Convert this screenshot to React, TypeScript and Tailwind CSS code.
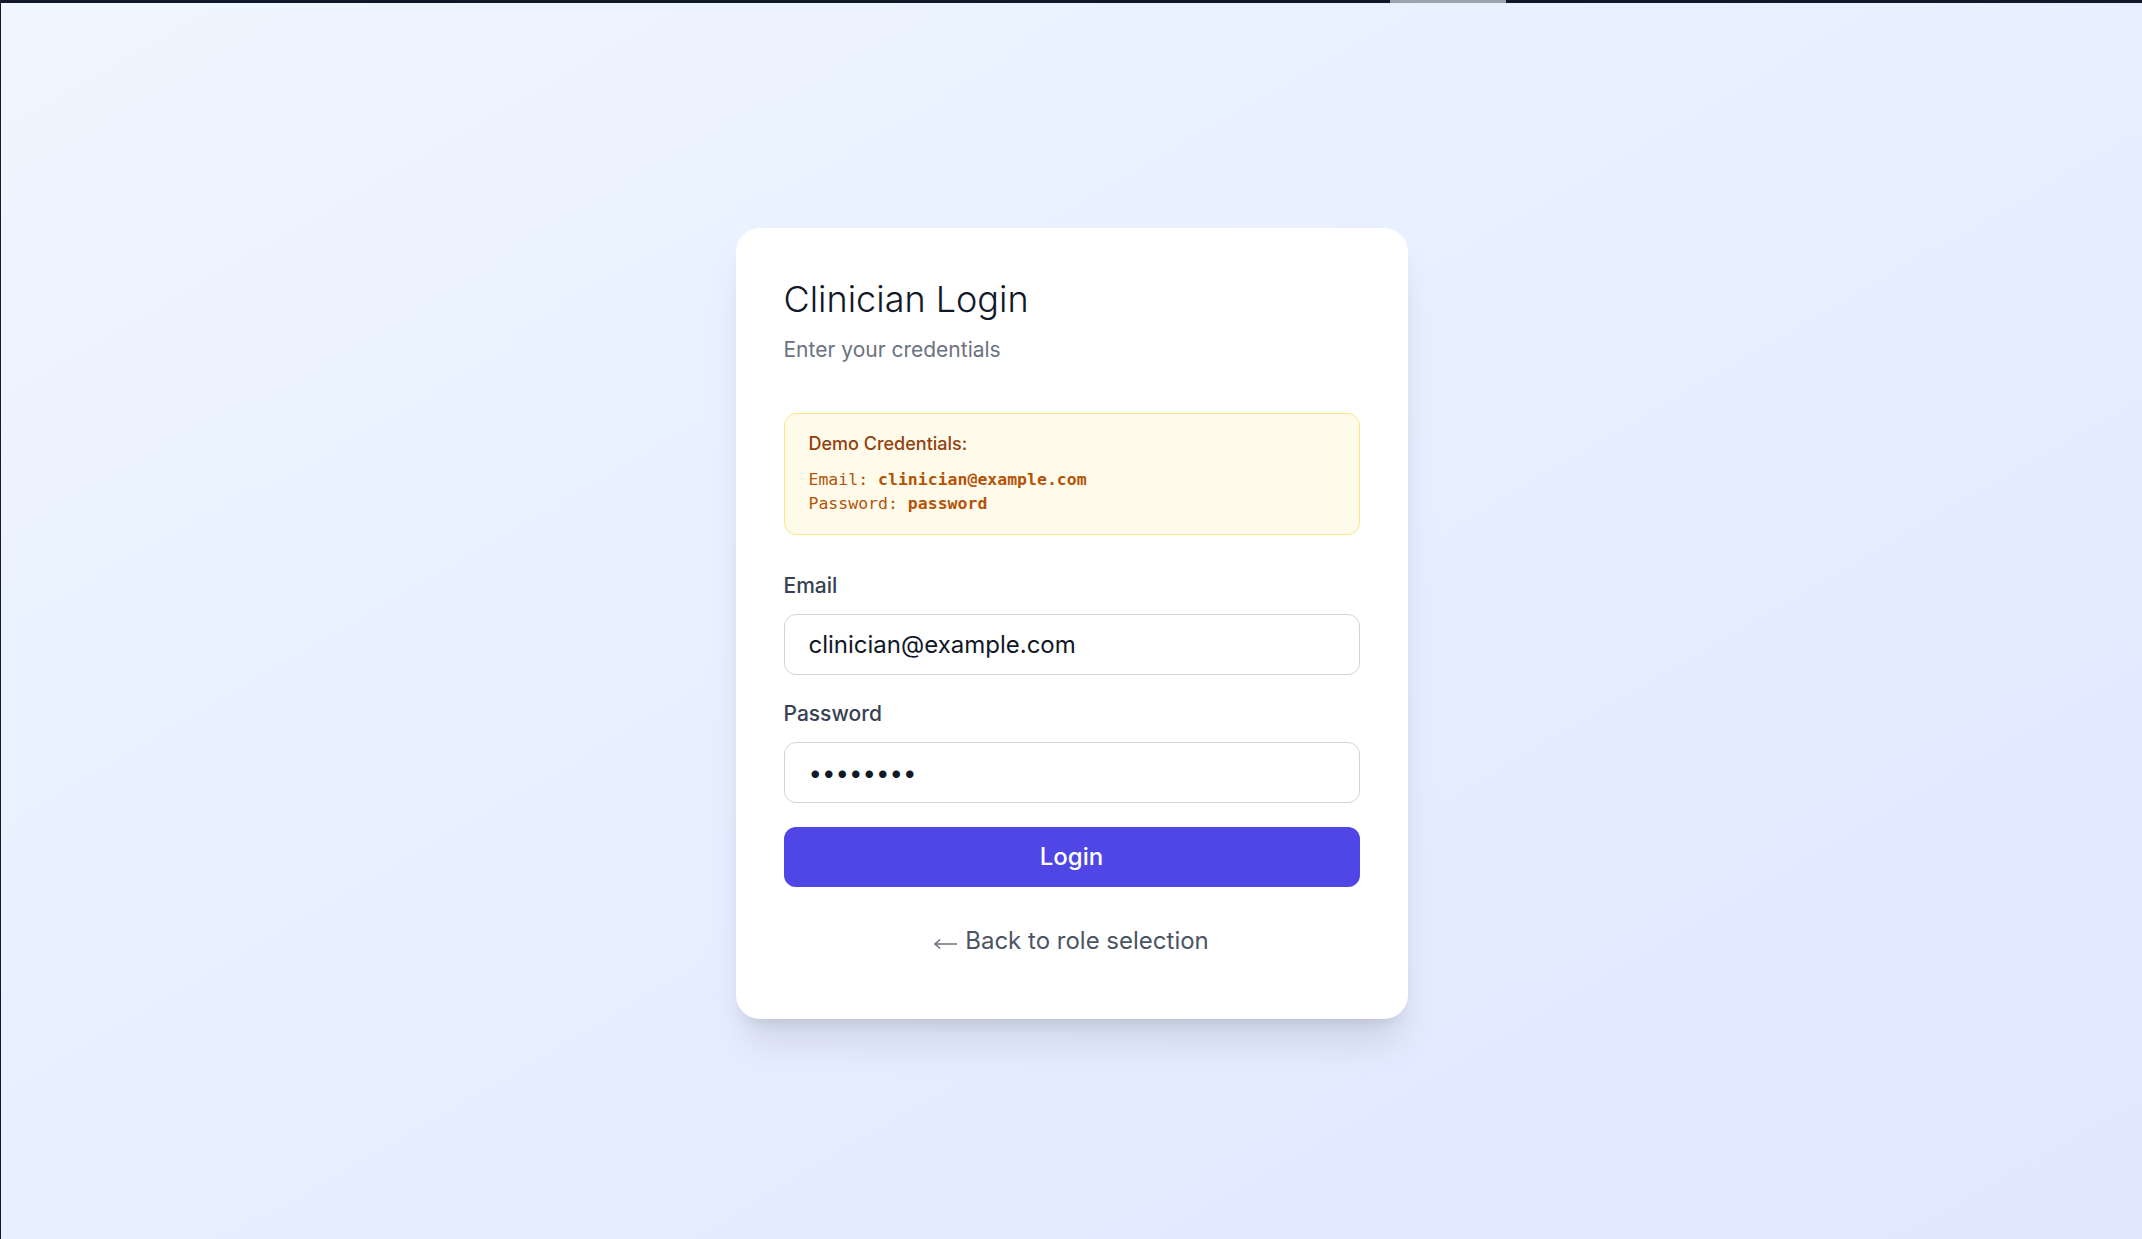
import { useState } from "react";

export default function App() {
  const [email, setEmail] = useState("clinician@example.com");
  const [password, setPassword] = useState("password");

  return (
    <div className="flex min-h-screen flex-col border-l border-[#1a1a24] bg-gradient-to-br from-[#eff6ff] to-[#e0e7ff] font-['Inter',sans-serif]">
      <div className="flex h-[3px] shrink-0">
        <div className="w-[1389px] bg-[#111827]" />
        <div className="w-[116px] bg-[#9ca3af]" />
        <div className="flex-1 bg-[#111827]" />
      </div>

      <main className="flex flex-1 items-center justify-center pt-[5px]">
        <div className="w-[672px] rounded-[24px] bg-white px-[48px] pb-[60px] pt-[47px] shadow-[0_30px_38px_-8px_rgba(0,0,0,0.1),0_12px_15px_-9px_rgba(0,0,0,0.1)]">
          <h1 className="text-[36px] leading-[48px] font-light text-[#111827]">Clinician Login</h1>
          <p className="mt-[12px] text-[21px] leading-[30px] text-[#6b7280]">Enter your credentials</p>

          <div className="mt-[48px] rounded-[12px] border-[1.5px] border-[#fde68a] bg-[#fffbeb] px-[24px] py-[18px]">
            <p className="text-[18px] leading-[24px] font-medium text-[#92400e]">Demo Credentials:</p>
            <div className="mt-[12px] font-['DejaVu_Sans_Mono',monospace] text-[16.5px] leading-[24px] text-[#b45309]">
              <div>
                Email: <span className="font-bold">clinician@example.com</span>
              </div>
              <div>
                Password: <span className="font-bold">password</span>
              </div>
            </div>
          </div>

          <form className="mt-[36px] flex flex-col gap-[24px]" onSubmit={(e) => e.preventDefault()}>
            <div>
              <label className="block text-[21px] leading-[30px] font-medium text-[#374151]">Email</label>
              <input
                type="email"
                value={email}
                onChange={(e) => setEmail(e.target.value)}
                className="mt-[13px] block h-[61px] w-full rounded-[12px] border-[1.5px] border-[#d1d5db] px-[24px] text-[24px] text-[#111827] outline-none"
              />
            </div>
            <div>
              <label className="block text-[21px] leading-[30px] font-medium text-[#374151]">Password</label>
              <input
                type="password"
                value={password}
                onChange={(e) => setPassword(e.target.value)}
                className="mt-[13px] block h-[61px] w-full rounded-[12px] border-[1.5px] border-[#d1d5db] px-[24px] text-[24px] text-[#111827] outline-none"
              />
            </div>
            <button
              type="submit"
              className="h-[60px] w-full rounded-[12px] bg-[#4f46e5] text-[24px] font-medium text-white"
            >
              Login
            </button>
          </form>

          <div className="mt-[36px] text-center">
            <button className="inline-flex items-center gap-[8px] text-[24px] leading-[36px] text-[#4b5563]">
              {/* thin long arrow, the font's own glyph is too short */}
              <svg width="23" height="12" viewBox="0 0 23 12" className="mt-[5px]" fill="none" stroke="#6b7280" strokeWidth="1.6">
                <path d="M1 6h22M6 1.5 1 6l5 4.5" />
              </svg>
              <span>Back to role selection</span>
            </button>
          </div>
        </div>
      </main>
    </div>
  );
}
